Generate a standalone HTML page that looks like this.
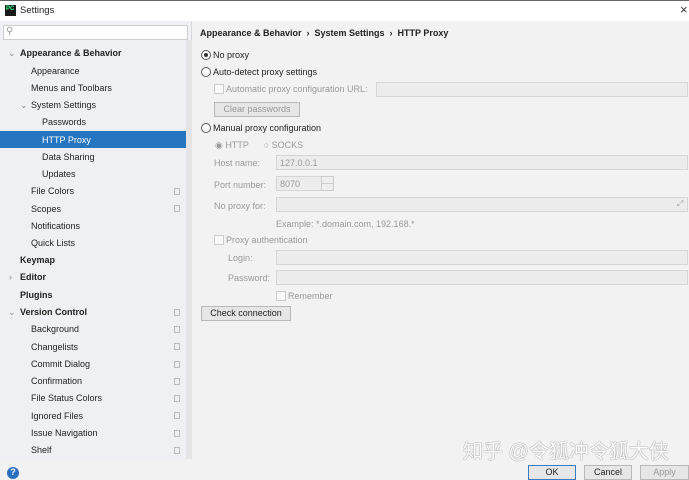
<!DOCTYPE html><html><head><style>
*{margin:0;padding:0;box-sizing:border-box}
body{width:689px;height:479px;overflow:hidden;background:#f2f2f2;font-family:"Liberation Sans",sans-serif;font-size:9px;color:#222;position:relative}
.a{position:absolute;white-space:nowrap}
.t{left:0;top:0;width:689px;height:21px;background:#fff;border-top:1px solid #666}
.side{left:0;top:21px;width:192px;height:438px;background:#eef0f3;border-right:1px solid #d6d6d6}
.sel{left:0;top:131px;width:186px;height:17px;background:#2675c0}
.f{background:#ececec;border:1px solid #d5d5d5;height:15px}
.r{width:10px;height:10px;border:1px solid #555;border-radius:50%;background:#fff}
.cb{width:10px;height:10px;border:1px solid #ccc;background:#fafafa}
.g{color:#999}
.cp{width:6px;height:7px;border:1px solid #bbb;left:174px}
.btn{border:1px solid #b8b8b8;background:#e6e6e6;height:15px;text-align:center;line-height:13px}
</style></head><body>
<div class="a t"></div>
<div class="a" style="left:5px;top:5px;width:11px;height:11px;background:#1a1a1a;color:#3f8;font-size:6px;font-weight:bold;line-height:8px;padding-left:1px">PC</div>
<div class="a" style="left:20px;top:5px;font-size:9.5px">Settings</div>
<div class="a" style="left:680px;top:2px;font-size:13px;color:#333">×</div>
<div class="a side"></div>
<div class="a" style="left:186px;top:40px;width:6px;height:419px;background:#e4e4e4"></div>
<div class="a" style="left:3px;top:25px;width:185px;height:15px;background:#fff;border:1px solid #ccc"></div>
<div class="a" style="left:6px;top:26px;color:#999;font-size:10px">⚲</div>
<div class="a sel"></div>
<div class="a" style="left:8px;top:48px;color:#888">⌄</div>
<div class="a" style="left:20px;top:48px;font-weight:bold">Appearance &amp; Behavior</div>
<div class="a" style="left:31px;top:66px">Appearance</div>
<div class="a" style="left:31px;top:83px">Menus and Toolbars</div>
<div class="a" style="left:20px;top:100px;color:#888">⌄</div>
<div class="a" style="left:31px;top:100px">System Settings</div>
<div class="a" style="left:42px;top:117px">Passwords</div>
<div class="a" style="left:42px;top:135px;color:#fff">HTTP Proxy</div>
<div class="a" style="left:42px;top:152px">Data Sharing</div>
<div class="a" style="left:42px;top:169px">Updates</div>
<div class="a" style="left:31px;top:186px">File Colors</div>
<div class="a" style="left:31px;top:204px">Scopes</div>
<div class="a" style="left:31px;top:221px">Notifications</div>
<div class="a" style="left:31px;top:238px">Quick Lists</div>
<div class="a" style="left:20px;top:255px;font-weight:bold">Keymap</div>
<div class="a" style="left:9px;top:272px;color:#888">›</div>
<div class="a" style="left:20px;top:272px;font-weight:bold">Editor</div>
<div class="a" style="left:20px;top:290px;font-weight:bold">Plugins</div>
<div class="a" style="left:8px;top:307px;color:#888">⌄</div>
<div class="a" style="left:20px;top:307px;font-weight:bold">Version Control</div>
<div class="a" style="left:31px;top:324px">Background</div>
<div class="a" style="left:31px;top:342px">Changelists</div>
<div class="a" style="left:31px;top:359px">Commit Dialog</div>
<div class="a" style="left:31px;top:376px">Confirmation</div>
<div class="a" style="left:31px;top:393px">File Status Colors</div>
<div class="a" style="left:31px;top:411px">Ignored Files</div>
<div class="a" style="left:31px;top:428px">Issue Navigation</div>
<div class="a" style="left:31px;top:445px">Shelf</div>
<div class="a cp" style="top:188px"></div><div class="a cp" style="top:205px"></div>
<div class="a cp" style="top:309px"></div><div class="a cp" style="top:326px"></div><div class="a cp" style="top:343px"></div><div class="a cp" style="top:361px"></div><div class="a cp" style="top:378px"></div><div class="a cp" style="top:395px"></div><div class="a cp" style="top:412px"></div><div class="a cp" style="top:430px"></div><div class="a cp" style="top:447px"></div>

<div class="a" style="left:200px;top:28px;font-weight:bold">Appearance &amp; Behavior &nbsp;› &nbsp;System Settings &nbsp;› &nbsp;HTTP Proxy</div>
<div class="a r" style="left:201px;top:50px"><div style="width:4px;height:4px;background:#333;border-radius:50%;margin:2px"></div></div>
<div class="a" style="left:213px;top:50px">No proxy</div>
<div class="a r" style="left:201px;top:67px"></div>
<div class="a" style="left:213px;top:67px">Auto-detect proxy settings</div>
<div class="a cb" style="left:214px;top:84px"></div>
<div class="a g" style="left:226px;top:84px">Automatic proxy configuration URL:</div>
<div class="a f" style="left:376px;top:82px;width:312px"></div>
<div class="a btn g" style="left:214px;top:102px;width:86px">Clear passwords</div>
<div class="a r" style="left:201px;top:123px"></div>
<div class="a" style="left:213px;top:123px">Manual proxy configuration</div>
<div class="a g" style="left:215px;top:140px">◉ HTTP &nbsp;&nbsp;&nbsp;&nbsp;&nbsp;○ SOCKS</div>
<div class="a g" style="left:214px;top:158px">Host name:</div>
<div class="a f g" style="left:276px;top:155px;width:412px;padding:2px 3px">127.0.0.1</div>
<div class="a g" style="left:214px;top:180px">Port number:</div>
<div class="a f g" style="left:276px;top:176px;width:58px;padding:2px 3px">8070</div>
<div class="a" style="left:321px;top:176px;width:13px;height:15px;border:1px solid #ccc;background:#eee"></div>
<div class="a" style="left:321px;top:183px;width:13px;height:1px;background:#ccc"></div>
<div class="a g" style="left:214px;top:201px">No proxy for:</div>
<div class="a f" style="left:276px;top:197px;width:412px"></div>
<div class="a g" style="left:677px;top:199px;font-size:8px">⤢</div>
<div class="a g" style="left:276px;top:219px">Example: *.domain.com, 192.168.*</div>
<div class="a cb" style="left:214px;top:235px"></div>
<div class="a g" style="left:226px;top:235px">Proxy authentication</div>
<div class="a g" style="left:228px;top:253px">Login:</div>
<div class="a f" style="left:276px;top:250px;width:412px"></div>
<div class="a g" style="left:228px;top:273px">Password:</div>
<div class="a f" style="left:276px;top:270px;width:412px"></div>
<div class="a cb" style="left:276px;top:291px"></div>
<div class="a g" style="left:288px;top:291px">Remember</div>
<div class="a btn" style="left:201px;top:306px;width:90px">Check connection</div>

<div class="a" style="left:463px;top:435px;font-size:20px;color:#fff;font-family:'Liberation Sans','Noto Sans CJK SC',sans-serif;text-shadow:0 0 1px #888,0 0 1px #888">知乎 @令狐冲令狐大侠</div>
<div class="a" style="left:7px;top:467px;width:12px;height:12px;border-radius:50%;background:#2a70c0;color:#fff;font-size:9px;text-align:center;font-weight:bold">?</div>
<div class="a btn" style="left:528px;top:465px;width:48px;border-color:#3a7bc8">OK</div>
<div class="a btn" style="left:584px;top:465px;width:48px">Cancel</div>
<div class="a btn g" style="left:640px;top:465px;width:49px">Apply</div>
</body></html>
